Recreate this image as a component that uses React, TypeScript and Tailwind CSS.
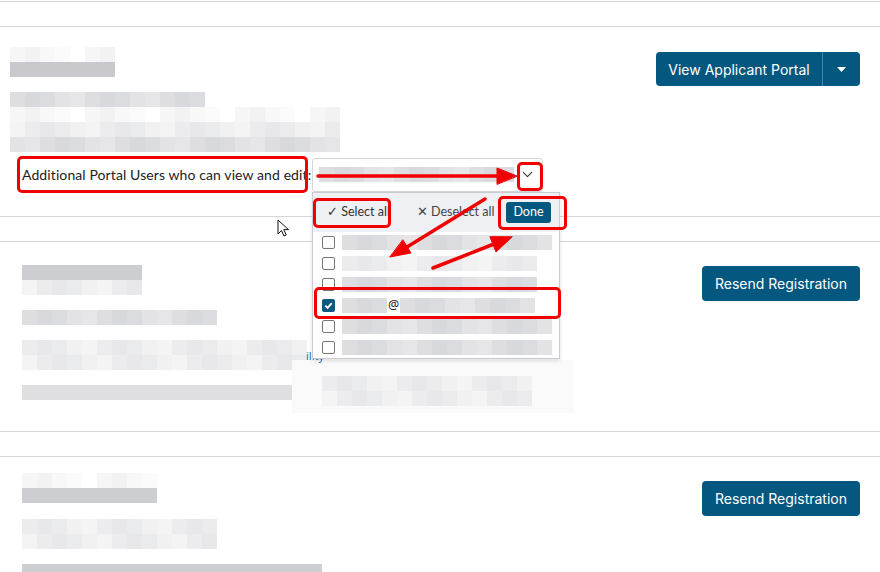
import { ChevronDown } from "lucide-react"

const DARK = ["bg-[#d1d1d5]", "bg-[#c8c8cd]", "bg-[#dadadd]", "bg-[#d5d6da]", "bg-[#cdced2]", "bg-[#dfdfe2]", "bg-[#c4c5ca]"]
const MID = ["bg-[#dedee1]", "bg-[#e3e3e6]", "bg-[#d8d9dc]", "bg-[#e6e6e8]", "bg-[#dbdcdf]"]
const LIGHT = ["bg-[#ececee]", "bg-[#f1f1f2]", "bg-[#e8e8ea]", "bg-[#f4f4f5]", "bg-[#eaebed]"]
const FAINT = ["bg-[#f6f6f7]", "bg-[#fbfbfb]", "bg-[#f2f2f3]", "bg-white", "bg-[#f8f8f9]"]

const TONES: Record<string, string[]> = { d: DARK, m: MID, l: LIGHT, f: FAINT }

// pixelated (redacted) text block, one 15px cell per column
function Blur({ cols, tones, seed = 0 }: { cols: number; tones: string; seed?: number }) {
  return (
    <div className="flex flex-col">
      {tones.split("").map((t, r) => (
        <div key={r} className="flex">
          {Array.from({ length: cols }).map((_, i) => {
            const pal = TONES[t]
            return <div key={i} className={`h-[15px] w-[15px] ${pal[(i * 7 + r * 3 + seed * 5) % pal.length]}`} />
          })}
        </div>
      ))}
    </div>
  )
}

function BlueButton({ children }: { children: React.ReactNode }) {
  return (
    <button className="h-[35px] w-[158px] rounded-[4px] bg-[#04587f] text-[14px] text-white font-[Inter,sans-serif]">
      {children}
    </button>
  )
}

function Checkbox({ checked = false }: { checked?: boolean }) {
  if (checked)
    return (
      <span className="flex h-[13px] w-[13px] shrink-0 items-center justify-center rounded-[2px] bg-[#0a5a82]">
        <svg width="9" height="9" viewBox="0 0 10 10">
          <path d="M1.5 5.2 L4 7.6 L8.6 2.4" stroke="white" strokeWidth="2" fill="none" />
        </svg>
      </span>
    )
  return <span className="h-[13px] w-[13px] shrink-0 rounded-[2px] border border-[#767676] bg-white" />
}

function Dropdown() {
  const rows = [
    { cols: 14, seed: 1, t: "m" },
    { cols: 13, seed: 2, t: "l" },
    { cols: 13, seed: 3, t: "m" },
    { cols: 0, seed: 4, t: "m" },
    { cols: 14, seed: 5, t: "m" },
    { cols: 14, seed: 6, t: "m" },
  ]
  return (
    <div className="absolute left-0 top-[34px] z-10 w-[248px] border border-[#c9cbd0] bg-white shadow-[0_2px_4px_rgba(0,0,0,0.12)]">
      <div className="flex h-[39px] items-center whitespace-nowrap bg-[#eef0f3] pl-[14px] pr-[8px] text-[12.5px] text-[#333] font-[Lato,sans-serif]">
        <span>✓ Select all</span>
        <span className="ml-[27px] text-[#444]">✕ Deselect all</span>
        <button className="ml-auto h-[21px] w-[45px] rounded-[3px] bg-[#04587f] text-[12.5px] text-white">Done</button>
      </div>
      <div className="flex flex-col">
        {rows.map((r, i) => (
          <div key={i} className="flex h-[21px] items-center gap-[7px] pl-[9px]">
            <Checkbox checked={i === 3} />
            {i === 3 ? (
              <div className="flex items-center">
                <Blur cols={3} tones="m" seed={8} />
                <span className="mx-[1px] text-[12.5px] text-[#222]">@</span>
                <Blur cols={9} tones="m" seed={9} />
              </div>
            ) : (
              <Blur cols={r.cols} tones={r.t} seed={r.seed} />
            )}
          </div>
        ))}
      </div>
    </div>
  )
}

function Annotations() {
  const box = "absolute rounded-[5px] border-[3px] border-[#f00000]"
  return (
    <div className="pointer-events-none absolute inset-0 z-20">
      <div className={`${box} left-[17px] top-[156px] h-[37px] w-[291px]`} />
      <div className={`${box} left-[517px] top-[162px] h-[29px] w-[26px]`} />
      <div className={`${box} left-[313px] top-[198px] h-[30px] w-[78px]`} />
      <div className={`${box} left-[498px] top-[196px] h-[34px] w-[69px]`} />
      <div className={`${box} left-[314px] top-[287px] h-[32px] w-[247px]`} />
      <svg className="absolute inset-0" width="880" height="572">
        <g fill="#f00000" stroke="#f00000" strokeWidth="3.5" strokeLinecap="round">
          <line x1="318" y1="176" x2="499" y2="176" />
          <polygon points="517,176 497,168 497,184" strokeWidth="1" />
          <line x1="485" y1="199" x2="407" y2="247" />
          <polygon points="390,257 411,253 403,240" strokeWidth="1" />
          <line x1="433" y1="268" x2="494" y2="244" />
          <polygon points="512,237 496,252 490,237" strokeWidth="1" />
        </g>
      </svg>
      {/* mouse pointer */}
      <svg className="absolute left-[277px] top-[219px]" width="14" height="19" viewBox="0 0 14 19">
        <path d="M1 1 L1 15 L4.5 11.5 L7 17 L9.2 16 L6.8 10.6 L11.5 10.6 Z" fill="white" stroke="#111" strokeWidth="1" strokeLinejoin="round" />
      </svg>
    </div>
  )
}

export default function App() {
  return (
    <div className="relative h-[572px] w-[880px] overflow-hidden bg-white font-['Noto_Sans',sans-serif]">
      <div className="h-[2px] border-b border-[#d6d6da]" />
      <div className="h-[24px]" />

      {/* card 1 */}
      <div className="flex justify-between border-y border-[#d6d6da]">
        <div className="flex flex-col pb-[24px] pl-[10px] pt-[20px]">
          <Blur cols={7} tones="fd" seed={1} />
          <div className="mt-[15px]">
            <Blur cols={13} tones="m" seed={2} />
          </div>
          <Blur cols={22} tones="flm" seed={3} />
          <div className="mt-[5px] flex h-[35px] items-center">
            <span className="ml-[12px] w-[290px] whitespace-nowrap text-[14px] text-[#222] font-[Lato,sans-serif] tracking-[0.1px]">
              Additional Portal Users who can view and edit:
            </span>
            <div className="relative">
              <div className="flex h-[34px] w-[231px] items-center justify-between rounded-[3px] border border-[#d4d6da] bg-white pl-[6px] pr-[6px]">
                <Blur cols={13} tones="m" seed={4} />
                <ChevronDown size={17} strokeWidth={1.5} className="text-[#333]" />
              </div>
              <Dropdown />
            </div>
          </div>
        </div>
        <div className="pr-[20px] pt-[25px]">
          <div className="flex h-[34px] w-[204px] items-center rounded-[4px] bg-[#04587f] text-white font-[Inter,sans-serif]">
            <span className="flex-1 text-center text-[14px]">View Applicant Portal</span>
            <span className="h-full w-px bg-[#4c84a1]" />
            <span className="flex w-[37px] justify-center">
              <svg width="9" height="5" viewBox="0 0 9 5">
                <path d="M0 0 L9 0 L4.5 5 Z" fill="white" />
              </svg>
            </span>
          </div>
        </div>
      </div>
      <div className="h-[24px]" />

      {/* card 2 */}
      <div className="relative flex justify-between border-y border-[#d6d6da]">
        <div className="flex flex-col pb-[31px] pl-[22px] pt-[23px]">
          <Blur cols={8} tones="dl" seed={5} />
          <div className="mt-[15px]">
            <Blur cols={13} tones="m" seed={6} />
          </div>
          <div className="mt-[15px]">
            <Blur cols={19} tones="ll" seed={7} />
          </div>
          <div className="mt-[15px]">
            <Blur cols={19} tones="d" seed={8} />
          </div>
        </div>
        <div className="absolute left-[292px] top-[118px] flex h-[53px] w-[282px] flex-col bg-[#fafafa] pl-[30px] pt-[16px]">
          <Blur cols={14} tones="ll" seed={9} />
        </div>
        <span className="absolute left-[306px] top-[108px] text-[11px] leading-none text-[#2a6fb0]">ility</span>
        <div className="pr-[20px] pt-[24px]">
          <BlueButton>Resend Registration</BlueButton>
        </div>
      </div>
      <div className="h-[24px]" />

      {/* card 3 */}
      <div className="flex justify-between border-t border-[#d6d6da]">
        <div className="flex flex-col pl-[22px] pt-[16px]">
          <Blur cols={9} tones="fd" seed={10} />
          <div className="mt-[16px]">
            <Blur cols={13} tones="ll" seed={11} />
          </div>
          <div className="mt-[15px]">
            <Blur cols={20} tones="d" seed={12} />
          </div>
        </div>
        <div className="pr-[20px] pt-[24px]">
          <BlueButton>Resend Registration</BlueButton>
        </div>
      </div>

      <Annotations />
    </div>
  )
}
